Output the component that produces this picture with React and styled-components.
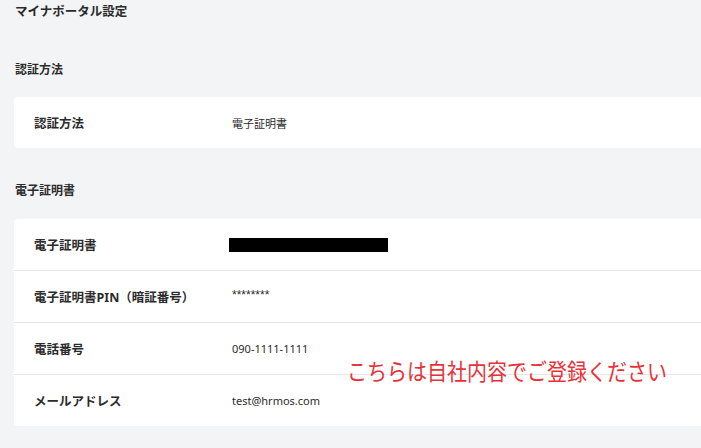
import React from 'react';
import styled, { createGlobalStyle } from 'styled-components';

const GlobalStyle = createGlobalStyle`
  html, body {
    margin: 0;
    padding: 0;
    background: #f3f4f6;
    overflow: hidden;
  }
  body {
    font-family: "Noto Sans", "Noto Sans CJK JP", sans-serif;
    color: #2b2b2b;
  }
`;

const Page = styled.div`
  position: relative;
  width: 760px;
  height: 448px;
  padding-left: 14px;
  box-sizing: border-box;
`;

const PageTitle = styled.h1`
  margin: 0;
  padding-left: 1px;
  font-size: 12.5px;
  line-height: 24px;
  font-weight: 700;
`;

const SectionTitle = styled.h2`
  margin: ${p => p.$top}px 0 ${p => p.$bottom}px;
  padding-left: 1px;
  font-size: 12px;
  line-height: 24px;
  font-weight: 700;
`;

const Card = styled.div`
  background: #ffffff;
  border-radius: 4px;
`;

const Row = styled.div`
  display: grid;
  grid-template-columns: 198px 1fr;
  align-items: center;
  height: 51px;
  padding-left: 20px;
  & + & {
    border-top: 1px solid #e3e6ea;
  }
`;

const Label = styled.div`
  font-size: 12.5px;
  font-weight: 700;
`;

const Value = styled.div`
  font-size: 11px;
  font-weight: 400;
`;

const Stars = styled.div`
  font-family: "Liberation Sans", Arial, sans-serif;
  font-size: 12px;
  margin-top: -4px;
`;

const Masked = styled.div`
  width: 159px;
  height: 14px;
  margin-left: -3px;
  background: #000;
`;

const Note = styled.div`
  position: absolute;
  left: 347px;
  top: 357px;
  font-family: "Noto Sans CJK JP", sans-serif;
  font-size: 20px;
  line-height: 28px;
  color: #e8323a;
  white-space: nowrap;
  transform: scaleY(1.15);
  transform-origin: left center;
`;

export default function App() {
  return (
    <Page>
      <GlobalStyle />
      <PageTitle>マイナポータル設定</PageTitle>

      <SectionTitle $top={34} $bottom={15}>認証方法</SectionTitle>
      <Card>
        <Row>
          <Label>認証方法</Label>
          <Value>電子証明書</Value>
        </Row>
      </Card>

      <SectionTitle $top={31} $bottom={16}>電子証明書</SectionTitle>
      <Card>
        <Row>
          <Label>電子証明書</Label>
          <Masked />
        </Row>
        <Row>
          <Label>電子証明書PIN（暗証番号）</Label>
          <Stars>********</Stars>
        </Row>
        <Row>
          <Label>電話番号</Label>
          <Value>090-1111-1111</Value>
        </Row>
        <Row>
          <Label>メールアドレス</Label>
          <Value>test@hrmos.com</Value>
        </Row>
      </Card>

      <Note>こちらは自社内容でご登録ください</Note>
    </Page>
  );
}
